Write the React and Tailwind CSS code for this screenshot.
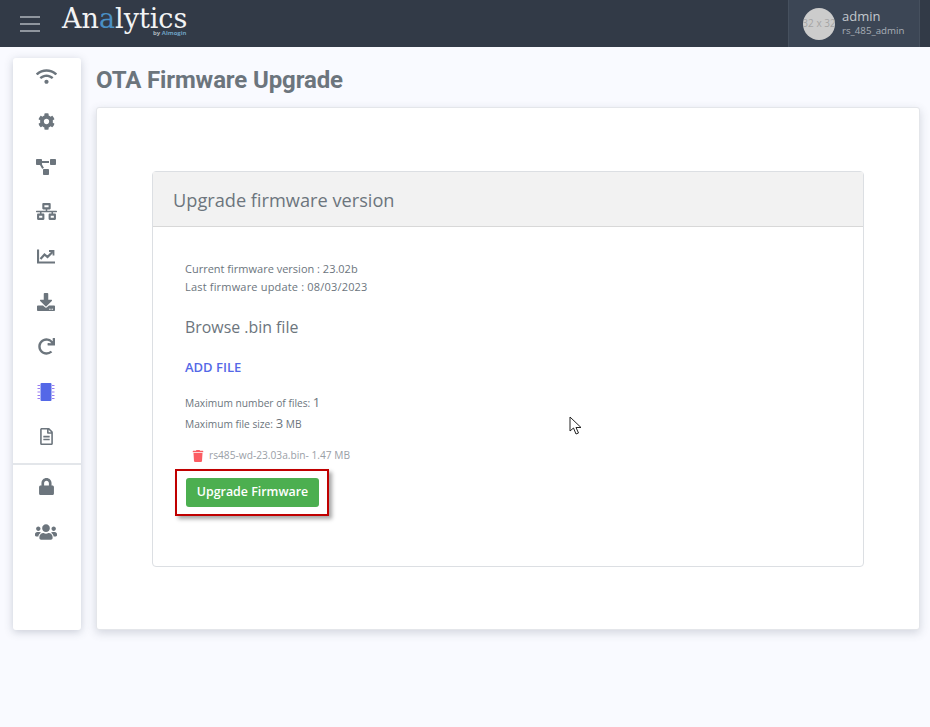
import { FaWifi, FaCog, FaProjectDiagram, FaNetworkWired, FaDownload, FaRedo, FaRegFileAlt, FaLock, FaUsers, FaTrash } from 'react-icons/fa';

const ChartIcon = () => (
  <svg width="18" height="15" viewBox="0 0 18 15" fill="none">
    <path d="M1 0.5V13.5H18" stroke="#6c757d" strokeWidth="2.2" />
    <path d="M3.5 10L7.5 5.5L10.5 8L15.5 3" stroke="#6c757d" strokeWidth="2.2" />
    <path d="M12 2H16.5V6.5" stroke="#6c757d" strokeWidth="1.8" />
  </svg>
);

const ChipIcon = () => (
  <svg width="18" height="18" viewBox="0 0 18 18">
    <rect x="3.5" y="0" width="11" height="18" rx="1" fill="#5468e7" />
    <path d="M0.5 2.5H3M0.5 5.5H3M0.5 9H3M0.5 12.5H3M0.5 15.5H3M15 2.5H17.5M15 5.5H17.5M15 9H17.5M15 12.5H17.5M15 15.5H17.5" stroke="#9a7df2" strokeWidth="1" />
  </svg>
);

const Cursor = () => (
  <svg width="14" height="20" viewBox="0 0 14 20" className="absolute left-[569px] top-[416px]">
    <path d="M1 1V15L4.5 12L7 18L9.5 17L7 11.5H12Z" fill="#fff" stroke="#222" strokeWidth="1" />
  </svg>
);

const SideIcon = ({ children, className = 'h-[45px]' }) => (
  <div className={`flex items-center justify-center pr-[2px] text-[#6c757d] ${className}`}>{children}</div>
);

export default function App() {
  return (
    <div className="relative h-[727px] w-[930px] overflow-hidden bg-[#f9faff] font-['Open_Sans',sans-serif]">
      <header className="flex h-[47px] items-center justify-between bg-[#323a47]">
        <div className="flex items-center">
          <div className="ml-[20px] flex w-[20px] flex-col gap-[5px]">
            <span className="h-[2px] bg-[#8f959e]" />
            <span className="h-[2px] bg-[#8f959e]" />
            <span className="h-[2px] bg-[#8f959e]" />
          </div>
          <div className="relative ml-[22px] h-[47px] w-[130px]">
            <span className="absolute left-0 top-[4px] font-['DejaVu_Serif',serif] text-[27px] leading-[30px] font-light text-[#f2f3f4]">
              An<span className="text-[#4a8fc4]">a</span>lytics
            </span>
            <span className="absolute left-[91px] top-[29px] text-[6px] leading-[8px] font-bold text-[#aeb6bd]">
              by <span className="text-[#6d9fc0]">Almogin</span>
            </span>
          </div>
        </div>
        <div className="mr-[10px] flex h-[47px] w-[132px] items-center border-x border-[#46505e] bg-[#3c4655] pl-[14px]">
          <div className="flex h-8 w-8 items-center justify-center overflow-hidden rounded-full bg-[#cccccc] text-[10px] whitespace-nowrap text-[#a5a5a5]">
            32 x 32
          </div>
          <div className="ml-[7px] -mt-[1px]">
            <div className="text-[13px] leading-[15px] text-[#c3c8ce]">admin</div>
            <div className="text-[9.7px] leading-[14px] text-[#a9afb7]">rs_485_admin</div>
          </div>
        </div>
      </header>

      <div className="ml-[13px] mt-[11px] flex gap-[15px]">
        <aside className="flex h-[572px] w-[68px] flex-col rounded-[3px] bg-white shadow-[0_2px_8px_rgba(60,70,90,0.25)]">
          <SideIcon className="h-[37px]"><FaWifi size={21} /></SideIcon>
          <SideIcon className="mt-[4px] h-[45px]"><FaCog size={17} /></SideIcon>
          <SideIcon><FaProjectDiagram size={20} /></SideIcon>
          <SideIcon><FaNetworkWired size={21} /></SideIcon>
          <SideIcon><ChartIcon /></SideIcon>
          <SideIcon><FaDownload size={18} /></SideIcon>
          <SideIcon><FaRedo size={17} /></SideIcon>
          <SideIcon><ChipIcon /></SideIcon>
          <SideIcon><FaRegFileAlt size={17} /></SideIcon>
          <div className="mt-[4px] h-[2px] bg-[#e3e6ea]" />
          <SideIcon className="-mt-[1px] h-[45px]"><FaLock size={17} /></SideIcon>
          <SideIcon><FaUsers size={22} /></SideIcon>
        </aside>

        <main className="w-[824px]">
          <h1 className="mt-[7px] h-[42px] font-['Roboto',sans-serif] text-[24px] leading-[30px] font-bold tracking-[-0.12px] text-[#6c757d]">
            OTA Firmware Upgrade
          </h1>
          <section className="h-[523px] rounded-[3px] border border-[#e4e6ea] bg-white px-[55px] pt-[63px] shadow-[0_3px_10px_rgba(60,70,90,0.2)]">
            <div className="h-[396px] w-[712px] rounded-[4px] border border-[#dcdfe3]">
              <div className="flex h-[55px] items-center border-b border-[#d8d8d8] bg-[#f2f2f2] pl-[20px] pt-[3px] text-[18.2px] text-[#6c757d]">
                Upgrade firmware version
              </div>
              <div className="pl-[32px] pt-[33px] text-[#6c757d]">
                <p className="text-[11px] leading-[18px]">Current firmware version : 23.02b</p>
                <p className="text-[11px] leading-[18px] tracking-[0.18px]">Last firmware update : 08/03/2023</p>
                <h2 className="mt-[20px] text-[15.9px] leading-[22px]">Browse .bin file</h2>
                <button className="mt-[17px] block text-[13px] leading-[24px] font-semibold text-[#5468e7]">ADD FILE</button>
                <p className="mt-[13px] flex h-[20px] items-baseline text-[10.2px] leading-[20px]">
                  Maximum number of files:&nbsp;<span className="text-[13px]">1</span>
                </p>
                <p className="mt-[1px] flex h-[20px] items-baseline text-[10.2px] leading-[20px]">
                  Maximum file size:&nbsp;<span className="text-[13px]">3</span>&nbsp;MB
                </p>
                <div className="ml-[7px] mt-[15px] flex h-[16px] items-center gap-[5px] text-[10.2px] text-[#9aa0a7]">
                  <FaTrash size={12} className="text-[#fb5c62]" />
                  rs485-wd-23.03a.bin- 1.47 MB
                </div>
                <div className="-ml-[10px] mt-[5px] w-[154px] border-2 border-[#c00000] bg-white px-[9px] py-[7px] shadow-[3px_3px_4px_rgba(0,0,0,0.35)]">
                  <button className="h-[29px] w-[133px] rounded-[3px] bg-[#4caf50] text-[12.4px] font-semibold text-white">
                    Upgrade Firmware
                  </button>
                </div>
              </div>
            </div>
          </section>
        </main>
      </div>
      <Cursor />
    </div>
  );
}
